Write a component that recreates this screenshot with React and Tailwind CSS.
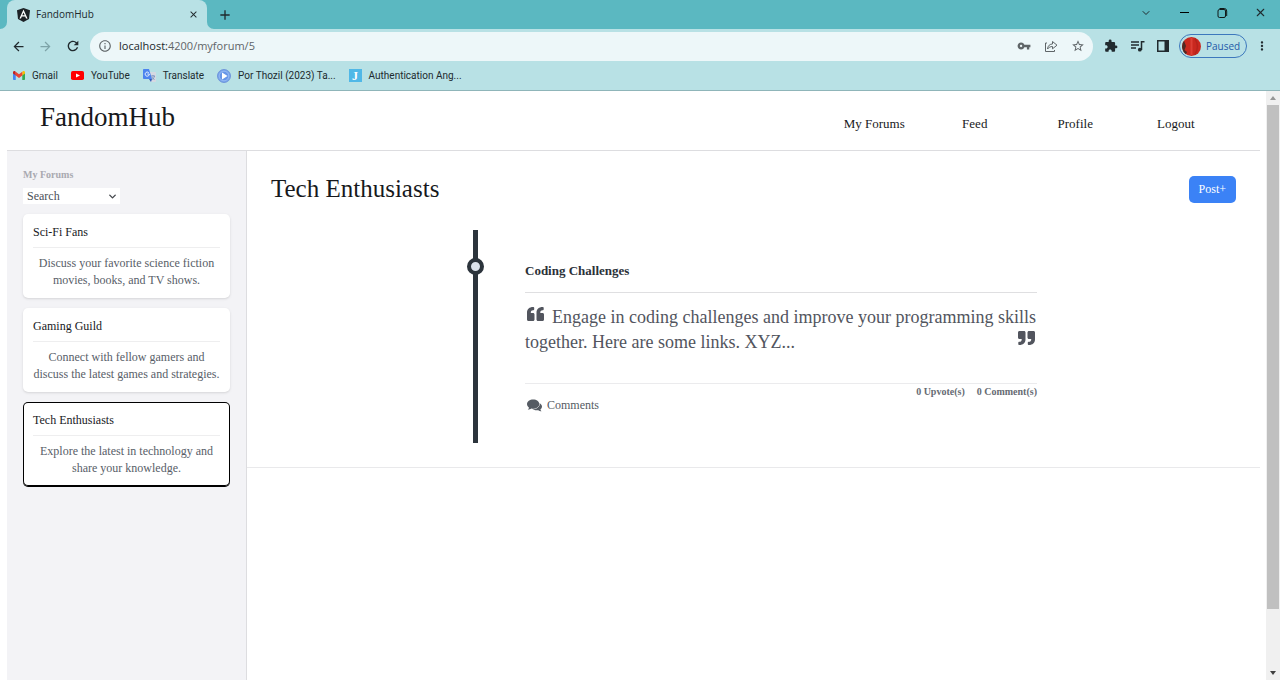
import React, { useState } from "react";
import { MdVpnKey, MdExtension, MdStarBorder, MdRefresh, MdArrowBack, MdArrowForward, MdMoreVert, MdInfoOutline, MdClose, MdAdd } from "react-icons/md";
import { ChevronDown, X } from "lucide-react";

const forums = [
  { name: "Sci-Fi Fans", text: "Discuss your favorite science fiction movies, books, and TV shows." },
  { name: "Gaming Guild", text: "Connect with fellow gamers and discuss the latest games and strategies." },
  { name: "Tech Enthusiasts", text: "Explore the latest in technology and share your knowledge." },
];

function AngularIcon() {
  return (
    <svg viewBox="0 0 26 28" className="h-[14px] w-[13px]" aria-hidden="true">
      <path d="M13 0 26 4.6 24 22 13 28 2 22 0 4.6Z" fill="#1d2226" />
      <path d="M13 3 4.9 21.2h3.1l1.6-4.1h6.8l1.6 4.1h3.1ZM13 8.8l2.4 5.7h-4.8Z" fill="#fff" fillRule="evenodd" />
    </svg>
  );
}

function GmailIcon() {
  return (
    <svg viewBox="0 0 24 18" className="h-[9px] w-3" aria-hidden="true">
      <path d="M0 3v13.4C0 17.3.7 18 1.6 18h3.9V7Z" fill="#4285f4" />
      <path d="M24 3v13.4c0 .9-.7 1.6-1.6 1.6h-3.9V7Z" fill="#34a853" />
      <path d="M0 2.5V5l5.5 4.2V1.6L4 .5C2.3-.8 0 .4 0 2.5Z" fill="#c5221f" />
      <path d="M24 2.5V5l-5.5 4.2V1.6L20 .5c1.7-1.3 4-.1 4 2Z" fill="#fbbc04" />
      <path d="M5.5 1.6 12 6.5l6.5-4.9v7.6L12 14 5.5 9.2Z" fill="#ea4335" />
    </svg>
  );
}

function YouTubeIcon() {
  return (
    <svg viewBox="0 0 26 18" className="h-[9px] w-[13px]" aria-hidden="true">
      <rect width="26" height="18" rx="3.5" fill="#f00" />
      <path d="m10 5 8 4-8 4Z" fill="#fff" />
    </svg>
  );
}

function TranslateIcon() {
  return (
    <svg viewBox="0 0 26 26" className="size-[13px]" aria-hidden="true">
      <path d="M11 6h13c1.1 0 2 .9 2 2v16c0 1.1-.9 2-2 2H16Z" fill="#d5d9e2" />
      <path d="M16 14h8M20 12v2m3 0c-1 4-3 6-5 7m0-5c1 3 3 4 5 5" fill="none" stroke="#6a87b8" strokeWidth="1.5" />
      <path d="M2 0h10l6 20H2c-1.1 0-2-.9-2-2V2C0 .9.9 0 2 0Z" fill="#4c84ef" />
      <path d="m12 20 4 6 2-6Z" fill="#3059b8" />
      <path d="M11.5 7.3A4.2 4.2 0 1 0 12.7 10H8.6" fill="none" stroke="#fff" strokeWidth="1.7" />
    </svg>
  );
}

function PlayDiscIcon() {
  return (
    <svg viewBox="0 0 28 28" className="size-[14px]" aria-hidden="true">
      <circle cx="14" cy="14" r="13" fill="#78a5ec" stroke="#6186d5" strokeWidth="1.5" />
      <circle cx="14" cy="14" r="9.5" fill="#6695e7" stroke="#b9d4fa" strokeWidth="1" />
      <path d="m10 7 11 7-11 7Z" fill="#fff" />
    </svg>
  );
}

function QuoteIcon({ className }) {
  return (
    <svg viewBox="0 0 17 14" className={className} fill="currentColor" aria-hidden="true">
      <path d="M6 6H3.800V5.500C3.800 4 4.700 3.200 6 3.200c.8 0 1.200-.4 1.200-1V1c0-.6-.4-1-1.200-1C2.500 0 0 2.200 0 5.500v7C0 13.400.6 14 1.500 14H6c.9 0 1.500-.6 1.500-1.500v-5C7.500 6.600 6.900 6 6 6Z" />
      <path d="M15.500 6H13.300V5.500c0-1.500.9-2.300 2.200-2.300.8 0 1.200-.4 1.200-1V1c0-.6-.4-1-1.200-1-3.500 0-6 2.200-6 5.500v7c0 .9.6 1.500 1.500 1.500h4.500c.9 0 1.500-.6 1.500-1.500v-5c0-.9-.6-1.500-1.500-1.500Z" />
    </svg>
  );
}

function CommentsIcon() {
  return (
    <svg viewBox="0 0 15 13" className="h-[13px] w-[15px]" fill="currentColor" aria-hidden="true">
      <path d="M9.500 3.800c3.200 0 5.500 1.600 5.500 3.800 0 1.200-.6 2.200-1.600 2.900.1.700.6 1.300 1.100 1.800-1.300 0-2.400-.5-3.100-1.100-2.700.4-5.200-.3-6.400-1.700Z" />
      <path d="M6.200.5C9.600.5 12.300 2.500 12.300 5.100S9.600 9.700 6.200 9.700c-.7 0-1.300-.1-1.900-.2-.8.600-2 1.200-3.500 1.200.6-.6 1.100-1.300 1.200-2C.7 7.800 0 6.500 0 5.100 0 2.500 2.800.5 6.200.5Z" stroke="#fff" strokeWidth="1" paintOrder="stroke" />
    </svg>
  );
}

function TabFoot({ flip }) {
  return (
    <svg viewBox="0 0 7 7" className={flip ? "absolute bottom-0 left-full size-[7px] -scale-x-100" : "absolute right-full bottom-0 size-[7px]"} aria-hidden="true">
      <path d="M7 0v7H0a7 7 0 0 0 7-7Z" fill="#b8e1e5" />
    </svg>
  );
}

const bookmarks = [
  { label: "Gmail", icon: <GmailIcon /> },
  { label: "YouTube", icon: <YouTubeIcon /> },
  { label: "Translate", icon: <TranslateIcon /> },
  { label: "Por Thozil (2023) Ta...", icon: <PlayDiscIcon /> },
  {
    label: "Authentication Ang...",
    icon: <span aria-hidden="true" className="flex size-[13px] items-center justify-center bg-[#50b8e7] font-['Liberation_Serif',serif] text-[12px] leading-none font-bold text-white">J</span>,
  },
];

function BrowserChrome() {
  return (
    <div className="border-b border-[#8fb5b9] bg-[#b8e1e5] font-['Open_Sans',sans-serif] text-[#202a2e]">
      <div className="flex h-[29px] items-end justify-between bg-[#5bb8c1] pl-[7px]">
        <div className="flex items-center gap-[10px]">
          <div className="relative flex h-[29px] w-[200px] items-center gap-[6px] rounded-t-lg bg-[#b8e1e5] pr-2 pl-[10px]">
            <TabFoot />
            <AngularIcon />
            <span className="flex-1 text-[10px]">FandomHub</span>
            <button aria-label="Close tab"><MdClose className="size-[11px]" /></button>
            <TabFoot flip />
          </div>
          <button aria-label="New tab"><MdAdd className="size-4" /></button>
        </div>
        <div className="flex h-full items-center gap-[26px] pr-[13px] pb-1">
          <button aria-label="Search tabs"><ChevronDown strokeWidth={2} className="size-3" /></button>
          <button aria-label="Minimize" className="flex w-3 justify-center"><span className="h-px w-[9px] bg-black" /></button>
          <button aria-label="Restore">
            <svg viewBox="0 0 12 12" className="size-3" fill="none" stroke="#101818" aria-hidden="true">
              <rect x="2" y="2.5" width="7.5" height="8" rx="1.500" />
              <path d="M3.500 1.500H8.500a2.500 2.500 0 0 1 2.200 2.500v5" />
            </svg>
          </button>
          <button aria-label="Close window"><X strokeWidth={2} className="size-[13px]" /></button>
        </div>
      </div>

      <div className="flex h-[34px] items-center pr-[11px] pl-[11px]">
        <div className="flex w-[79px] items-center gap-3">
          <button aria-label="Back"><MdArrowBack className="size-[15px]" /></button>
          <button aria-label="Forward" className="text-[#7da3a8]"><MdArrowForward className="size-[15px]" /></button>
          <button aria-label="Reload"><MdRefresh className="size-[16px]" /></button>
        </div>
        <div className="flex h-[29px] flex-1 items-center gap-[7px] rounded-full bg-[#edf7f9] pr-2 pl-2 text-[#5f6568]">
          <MdInfoOutline className="size-[14px]" />
          <span className="flex-1 text-[11px]" aria-label="Address"><span className="text-[#20282b]">localhost:</span>4200/myforum/5</span>
          <div className="flex items-center gap-[13px]">
            <button aria-label="Passwords"><MdVpnKey className="size-[14px]" /></button>
            <button aria-label="Share">
              <svg viewBox="0 0 14 14" className="size-[14px]" fill="none" stroke="currentColor" strokeLinejoin="round" aria-hidden="true">
                <path d="M3 4H1.500v8.500h9V11" />
                <path d="M3.500 10c.4-3.500 2.500-5 5-5V2.500L13 6.200 8.500 9.800V7.500C6.500 7.500 4.800 8.300 3.500 10Z" />
              </svg>
            </button>
            <button aria-label="Bookmark"><MdStarBorder className="size-[14px]" /></button>
          </div>
        </div>
        <div className="flex items-center gap-3 pl-[11px]">
          <button aria-label="Extensions"><MdExtension className="size-[14px]" /></button>
          <button aria-label="Media controls">
            <svg viewBox="0 0 15 14" className="h-[14px] w-[15px]" fill="none" stroke="currentColor" strokeWidth="1.500" aria-hidden="true">
              <path d="M1 3h8M1 6h8M1 9h5M11.500 11V2.700H14.500" />
              <circle cx="9.800" cy="10.700" r="1.900" fill="currentColor" stroke="none" />
            </svg>
          </button>
          <button aria-label="Side panel">
            <svg viewBox="0 0 12 12" className="size-3" aria-hidden="true">
              <path d="M0 0h12v12H0ZM1.500 1.500v9H7.500v-9Z" fill="currentColor" fillRule="evenodd" />
            </svg>
          </button>
        </div>
        <button className="ml-[10px] flex h-6 w-[68px] items-center gap-[5px] rounded-full border border-[#3d78bd] pl-[2px] text-[10px] text-[#1f5aa8]">
          <svg viewBox="0 0 19 19" className="size-[19px]" aria-hidden="true">
            <circle cx="9.500" cy="9.500" r="9.500" fill="#c9281f" />
            <path d="M2 3.800A9.500 9.500 0 0 0 4 17.200L5 15 2.500 13 4 9Z" fill="#4f2925" />
            <path d="M9.500 1v17" stroke="#dc3f35" strokeWidth="2" />
            <path d="M13 1.500c3 5 3 11 0 16" stroke="#b5231c" fill="none" strokeWidth="1.500" />
          </svg>
          Paused
        </button>
        <button aria-label="Menu" className="ml-[8px]"><MdMoreVert className="size-[14px]" /></button>
      </div>

      <nav aria-label="Bookmarks" className="flex h-[27px] items-center gap-[13px] pb-[2px] pl-[13px] font-[Roboto,sans-serif] text-[10px]">
        {bookmarks.map((b) => (
          <a key={b.label} href="#" className="flex items-center gap-[7px]">{b.icon}{b.label}</a>
        ))}
      </nav>
    </div>
  );
}

function Sidebar({ active, onSelect }) {
  return (
    <aside className="w-[240px] shrink-0 border-r border-[#dddde0] bg-[#f3f3f6] px-4 pt-4">
      <label htmlFor="forum-search" className="block text-[10px] leading-[15px] font-bold text-[#a9a9b0]">My Forums</label>
      <div className="relative mt-[6px] w-[97px]">
        <select id="forum-search" className="block h-4 w-full appearance-none bg-white pl-1 text-[12px] leading-4 text-[#4b5058]">
          <option>Search</option>
        </select>
        <ChevronDown strokeWidth={3} className="pointer-events-none absolute top-[3px] right-[2px] size-[11px] text-[#44474c]" />
      </div>
      <div className="mt-[10px] flex flex-col gap-[10px]">
        {forums.map((f) => (
          <button
            key={f.name}
            onClick={() => onSelect(f.name)}
            className={
              "block w-full rounded-[5px] bg-white px-[10px] pt-[10px] pb-[9px] text-[12px] leading-[17px] " +
              (f.name === active ? "shadow-[0_1px_0_#000] ring-1 ring-black ring-inset" : "shadow-sm")
            }
          >
            <span className="block border-b border-[#eeeeef] pb-[6px] text-left text-[#17191d]">{f.name}</span>
            <span className="block pt-[7px] text-center text-[#585e68]">{f.text}</span>
          </button>
        ))}
      </div>
    </aside>
  );
}

function Post() {
  return (
    <article className="flex justify-center gap-[41px] border-b border-[#e9e9eb] pt-[26px] pr-[3px] pb-6">
      <div className="relative flex h-[213px] w-[17px] justify-center" aria-hidden="true">
        <span className="h-full w-[5px] bg-[#2c343c]" />
        <span className="absolute top-7 left-0 size-[17px] rounded-full border-4 border-[#2c343c] bg-[#dce3ec]" />
      </div>
      <div className="max-w-[512px] flex-1 pt-8">
        <h2 className="border-b border-[#dfdfe1] pb-[12px] text-[13px] leading-[18px] font-bold text-[#2b3139]">Coding Challenges</h2>
        <p className="h-[91px] border-b border-[#ebebed] pt-3 text-[18px] leading-[25px] text-[#52555e]">
          <QuoteIcon className="mr-2 ml-[2px] inline h-[14px] w-[17px] align-[2px]" />
          Engage in coding challenges and improve your programming skills together. Here are some links. XYZ...
          <QuoteIcon className="float-right mt-px mr-[2px] h-[14px] w-[17px] rotate-180" />
        </p>
        <div className="flex items-start justify-between">
          <button className="mt-[13px] ml-[2px] flex items-center gap-[5px] text-[12px] leading-4 text-[#555b63]">
            <CommentsIcon />
            Comments
          </button>
          <div className="flex gap-3 pt-px text-[10px] leading-[14px] font-bold text-[#666b73]">
            <span>0 Upvote(s)</span>
            <span>0 Comment(s)</span>
          </div>
        </div>
      </div>
    </article>
  );
}

function ScrollTrack() {
  return (
    <div className="flex w-[14px] shrink-0 flex-col items-center bg-[#f0f0f0] pt-[5px] pb-[5px]" aria-hidden="true">
      <svg viewBox="0 0 6 4" className="h-1 w-[6px]"><path d="M0 4 3 0l3 4Z" fill="#969696" /></svg>
      <div className="mt-[5px] w-3 grow-[504] bg-[#c0c0c0]" />
      <div className="grow-[62]" />
      <svg viewBox="0 0 6 4" className="h-1 w-[6px]"><path d="m0 0 3 4 3-4Z" fill="#404040" /></svg>
    </div>
  );
}

export default function App() {
  const [active, setActive] = useState("Tech Enthusiasts");
  return (
    <div className="flex min-h-screen flex-col bg-white font-['Liberation_Serif',serif]">
      <BrowserChrome />
      <div className="flex flex-1">
        <div className="flex min-w-0 flex-1 flex-col pr-[6px] pl-[7px]">
          <header className="flex h-[60px] items-center justify-between border-b border-[#dddde0] pr-[34px] pl-[33px]">
            <a href="#" className="pb-[7px] text-[27px] leading-8 text-[#17191c]">FandomHub</a>
            <nav aria-label="Main" className="grid w-[402px] grid-cols-4 pt-[7px] text-center text-[13px] leading-5 text-[#17191c]">
              <a href="#">My Forums</a>
              <a href="#">Feed</a>
              <a href="#">Profile</a>
              <a href="#">Logout</a>
            </nav>
          </header>
          <div className="flex flex-1">
            <Sidebar active={active} onSelect={setActive} />
            <main className="min-w-0 flex-1">
              <div className="flex items-center justify-between px-6 pt-6 pb-px">
                <h1 className="text-[25px] leading-7 text-[#17191c]">{active}</h1>
                <button className="h-[27px] rounded-[5px] bg-[#3b82f6] px-[10px] text-[12px] text-white">Post+</button>
              </div>
              <Post />
            </main>
          </div>
        </div>
        <ScrollTrack />
      </div>
    </div>
  );
}
